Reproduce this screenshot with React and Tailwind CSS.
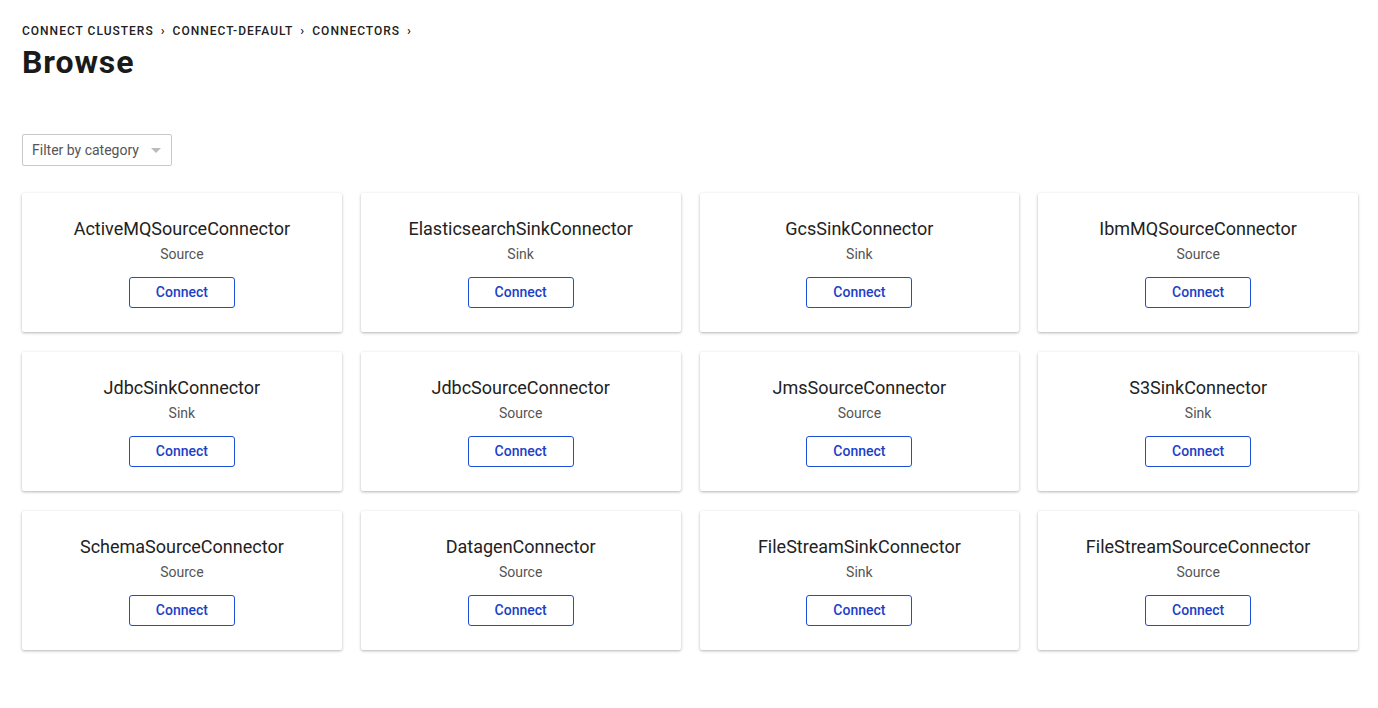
const connectors = [
  { name: 'ActiveMQSourceConnector', type: 'Source' },
  { name: 'ElasticsearchSinkConnector', type: 'Sink' },
  { name: 'GcsSinkConnector', type: 'Sink' },
  { name: 'IbmMQSourceConnector', type: 'Source' },
  { name: 'JdbcSinkConnector', type: 'Sink' },
  { name: 'JdbcSourceConnector', type: 'Source' },
  { name: 'JmsSourceConnector', type: 'Source' },
  { name: 'S3SinkConnector', type: 'Sink' },
  { name: 'SchemaSourceConnector', type: 'Source' },
  { name: 'DatagenConnector', type: 'Source' },
  { name: 'FileStreamSinkConnector', type: 'Sink' },
  { name: 'FileStreamSourceConnector', type: 'Source' },
];

function ConnectorCard({ name, type }) {
  return (
    <div className="h-[139px] bg-white rounded-[2px] shadow-[0_1px_3px_rgba(0,0,0,0.3)] flex flex-col items-center pt-[24px]">
      <div className="text-[18px] leading-6 text-[#222]">{name}</div>
      <div className="text-[14px] leading-5 text-[#555] mt-[3px]">{type}</div>
      <button className="mt-[13px] w-[106px] h-[31px] border border-[#1d4ed8] rounded-[3px] text-[14px] font-medium text-[#1d3fc8] bg-white">
        Connect
      </button>
    </div>
  );
}

export default function App() {
  return (
    <div className="min-h-screen bg-white pl-[22px] pr-[20px] pt-[23px] font-['Roboto',sans-serif]">
      <nav className="flex items-center text-[12px] leading-4 font-medium tracking-[1px] text-[#222] uppercase">
        <span>Connect Clusters</span>
        <span className="mx-[7px] text-[13px]">›</span>
        <span>Connect-default</span>
        <span className="mx-[7px] text-[13px]">›</span>
        <span>Connectors</span>
        <span className="mx-[7px] text-[13px]">›</span>
      </nav>
      <h1 className="text-[32px] leading-10 font-bold text-[#1a1a1a] mt-[3px] tracking-[0.9px]">Browse</h1>

      <div className="mt-[52px] w-[150px] h-[32px] border border-[#c8c8c8] rounded-[2px] flex items-center justify-between pl-[9px] pr-[10px]">
        <span className="text-[14px] text-[#555]">Filter by category</span>
        <span className="w-0 h-0 border-l-[5px] border-r-[5px] border-t-[5px] border-l-transparent border-r-transparent border-t-[#bbb]"></span>
      </div>

      <div className="mt-[27px] grid grid-cols-4 gap-x-[19px] gap-y-[20px]">
        {connectors.map((c) => (
          <ConnectorCard key={c.name} name={c.name} type={c.type} />
        ))}
      </div>
    </div>
  );
}
